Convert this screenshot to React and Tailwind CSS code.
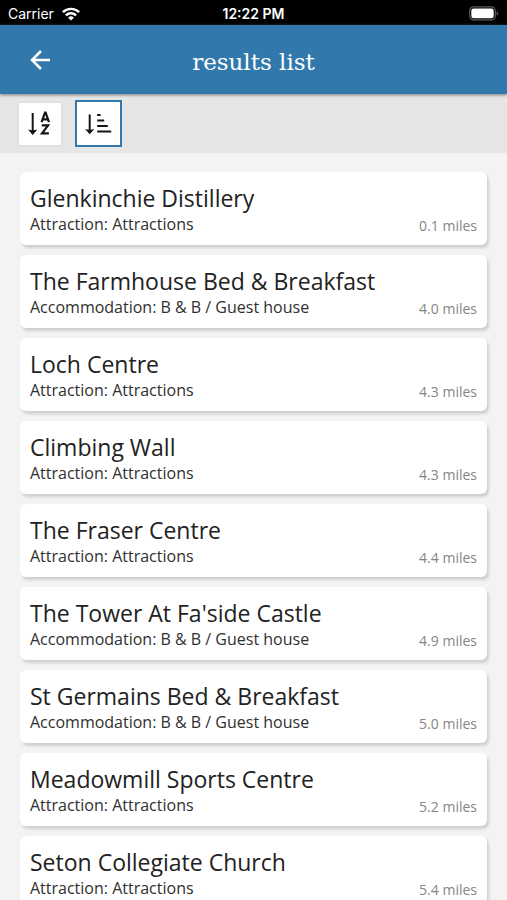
const results = [
  { name: "Glenkinchie Distillery", type: "Attraction: Attractions", distance: "0.1 miles" },
  { name: "The Farmhouse Bed & Breakfast", type: "Accommodation: B & B / Guest house", distance: "4.0 miles" },
  { name: "Loch Centre", type: "Attraction: Attractions", distance: "4.3 miles" },
  { name: "Climbing Wall", type: "Attraction: Attractions", distance: "4.3 miles" },
  { name: "The Fraser Centre", type: "Attraction: Attractions", distance: "4.4 miles" },
  { name: "The Tower At Fa'side Castle", type: "Accommodation: B & B / Guest house", distance: "4.9 miles" },
  { name: "St Germains Bed & Breakfast", type: "Accommodation: B & B / Guest house", distance: "5.0 miles" },
  { name: "Meadowmill Sports Centre", type: "Attraction: Attractions", distance: "5.2 miles" },
  { name: "Seton Collegiate Church", type: "Attraction: Attractions", distance: "5.4 miles" },
];

function WifiIcon() {
  return (
    <svg viewBox="0 0 18 14" className="h-[14px] w-[18px]" fill="none" stroke="white" strokeWidth="2.4" aria-hidden="true">
      <path d="M0.9 5.2a11.6 11.6 0 0 1 16.2 0" />
      <path d="M3.9 8.3a7.3 7.3 0 0 1 10.2 0" />
      <path d="M9 13.6 6.1 10.7a4.1 4.1 0 0 1 5.8 0Z" fill="white" stroke="none" />
    </svg>
  );
}

function BatteryIcon() {
  return (
    <svg viewBox="0 0 30 15" className="h-[15px] w-[30px]" aria-hidden="true">
      <rect x="0.7" y="0.9" width="25.6" height="13" rx="3.8" fill="none" stroke="#5c5c5c" strokeWidth="1.2" />
      <rect x="2.3" y="2.5" width="22.4" height="9.8" rx="2.2" fill="white" />
      <path d="M27.6 5.2c2.2.8 2.2 3.6 0 4.4Z" fill="#5c5c5c" />
    </svg>
  );
}

function BackIcon() {
  return (
    <svg viewBox="0 0 20 20" className="size-5" fill="none" stroke="white" strokeWidth="2.5" aria-hidden="true">
      <path d="M20 10H2.2M11 1 2 10l9 9" />
    </svg>
  );
}

function SortAlphaIcon() {
  return (
    <svg viewBox="0 0 24 26" className="h-[26px] w-6" fill="none" stroke="#151515" aria-hidden="true">
      <path d="M4.7 2v20" strokeWidth="2" />
      <path d="M0 18.6q4.7 1.4 9.4 0L4.7 24Z" fill="#151515" stroke="none" />
      <path d="M13.6 11.1 17 1.6h.6l3.4 9.5M14.8 8.3h5" strokeWidth="2.2" />
      <path d="M13.8 14.4h6.3l-6.1 8h6.9" strokeWidth="2.2" />
    </svg>
  );
}

function SortDistanceIcon() {
  return (
    <svg viewBox="0 0 28 24" className="h-6 w-7" fill="none" stroke="#151515" aria-hidden="true">
      <path d="M4.7 2.5V20" strokeWidth="2" />
      <path d="M0 17q4.7 1.4 9.4 0L4.7 22.2Z" fill="#151515" stroke="none" />
      <path d="M12.2 3h3.4M12.2 8.4h7M12.2 14h10.6M12.2 19.6h14" strokeWidth="2" />
    </svg>
  );
}

function StatusBar() {
  return (
    <div className="grid h-[25px] shrink-0 grid-cols-3 items-center bg-black px-2 font-['Inter','Liberation_Sans',sans-serif] text-sm leading-5 text-white">
      <div className="flex items-center gap-2 pt-0.5">
        <span>Carrier</span>
        <WifiIcon />
      </div>
      <time className="pt-0.5 text-center font-semibold">12:22 PM</time>
      <div className="flex justify-end pt-0.5">
        <BatteryIcon />
      </div>
    </div>
  );
}

function ResultCard({ name, type, distance }) {
  return (
    <li className="flex flex-col rounded-md bg-white px-2.5 pt-3 pb-[9px] shadow-[2px_3px_3px_#cfcfcf]">
      <h2 className="text-[23px] leading-7 text-[#222222]">{name}</h2>
      <div className="flex items-center justify-between">
        <p className="text-[16px] leading-6 text-[#303030]">{type}</p>
        <span className="pt-1 text-[14px] leading-5 text-[#858585]">{distance}</span>
      </div>
    </li>
  );
}

export default function App() {
  return (
    <div className="flex h-screen flex-col overflow-hidden bg-[#f3f3f3] font-['Open_Sans','Noto_Sans',sans-serif]">
      <StatusBar />
      <header className="relative z-10 grid h-[69px] shrink-0 grid-cols-[80px_1fr_80px] items-center bg-[#3179ad] shadow-[0_1px_3px_#777777]">
        <button type="button" aria-label="Back" className="flex h-full items-center pl-[30px]">
          <BackIcon />
        </button>
        <h1 className="pt-1 text-center font-['DejaVu_Serif',serif] text-[23px] leading-8 text-white">results list</h1>
      </header>
      <div className="flex h-[59px] shrink-0 items-center gap-3 bg-[#e6e6e6] px-[17px]">
        <button type="button" aria-label="Sort alphabetically" className="flex size-[46px] items-center justify-center border-2 border-[#e0e0e0] bg-white">
          <SortAlphaIcon />
        </button>
        <button type="button" aria-label="Sort by distance" aria-pressed="true" className="flex size-[47px] items-center justify-center border-2 border-[#3179ad] bg-white">
          <SortDistanceIcon />
        </button>
      </div>
      <main className="min-h-0 flex-1 overflow-hidden px-5 pt-[19px]">
        <ul className="flex flex-col gap-[10px]">
          {results.map((result) => (
            <ResultCard key={result.name} {...result} />
          ))}
        </ul>
      </main>
    </div>
  );
}
